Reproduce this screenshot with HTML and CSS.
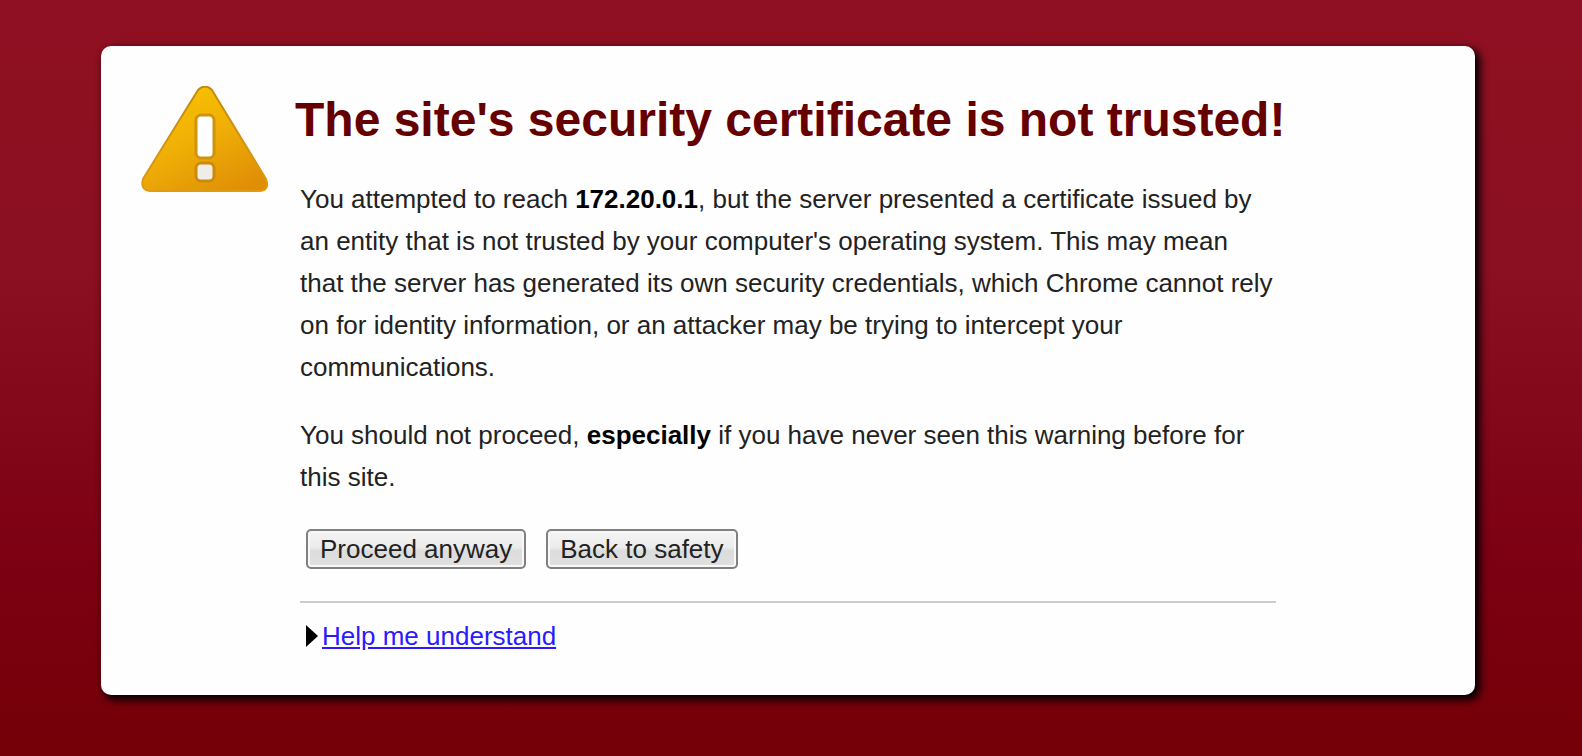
FILE: index.html
```html
<!doctype html>
<html lang="en">
<head>
  <meta charset="utf-8">
  <title>SSL Error</title>
  <link rel="stylesheet" href="styles.css">
</head>
<body>
  <div class="box">
    <svg class="icon" viewBox="0 0 128 106" aria-hidden="true">
      <defs>
        <linearGradient id="fill" x1="0.2" y1="0" x2="0.8" y2="1">
          <stop offset="0" stop-color="#f9c400"/>
          <stop offset="0.5" stop-color="#efae06"/>
          <stop offset="1" stop-color="#df8e06"/>
        </linearGradient>
        <linearGradient id="edge" x1="0" y1="0" x2="0" y2="1">
          <stop offset="0" stop-color="#c08a0c"/>
          <stop offset="1" stop-color="#e09c10"/>
        </linearGradient>
      </defs>
      <path d="M57 4Q64 -3 71 4L125 93Q129 104 119 105L9 105Q-1 104 2 93Z" fill="url(#fill)" stroke="url(#edge)" stroke-width="2"/>
      <rect x="55" y="29" width="18" height="43" rx="5" fill="#fff" stroke="#cf930c" stroke-width="3"/>
      <rect x="55" y="77" width="18" height="18" rx="5" fill="#f0ede8" stroke="#cb8a0c" stroke-width="3"/>
    </svg>
    <div class="content">
      <h1>The site's security certificate is not trusted!</h1>
      <p>You attempted to reach <strong>172.20.0.1</strong>, but the server presented a certificate issued by an entity that is not trusted by your computer's operating system. This may mean that the server has generated its own security credentials, which Chrome cannot rely on for identity information, or an attacker may be trying to intercept your communications.</p>
      <p>You should not proceed, <strong>especially</strong> if you have never seen this warning before for this site.</p>
      <form class="buttons">
        <button type="button">Proceed anyway</button>
        <button type="button">Back to safety</button>
      </form>
      <div class="more">
        <svg class="twisty" viewBox="0 0 12 22" aria-hidden="true"><path d="M0 0L12 11L0 22Z"/></svg>
        <a href="#">Help me understand</a>
      </div>
    </div>
  </div>
</body>
</html>
```

FILE: styles.css
```css
* {
  box-sizing: border-box;
}
html {
  min-height: 100%;
  background: linear-gradient(#8f1022, #8b1021 35%, #7c0012 75%, #750008);
}
body {
  margin: 0;
  padding: 46px 107px 60px 101px;
  font-family: "Liberation Sans", Arial, sans-serif;
  font-size: 26px;
  line-height: 42px;
  color: #222;
}
.box {
  display: flex;
  align-items: flex-start;
  gap: 31px;
  padding: 40px 40px 38px;
  background: #fefefe;
  border-radius: 10px;
  box-shadow: 4px 4px 9px 1px #000;
}
.icon {
  flex: none;
  width: 128px;
  height: 106px;
}
.content {
  max-width: 976px;
}
h1 {
  margin: 4px 0 28px -5px;
  font-size: 48px;
  line-height: 60px;
  color: #660000;
  white-space: nowrap;
}
p {
  margin: 0 0 26px;
}
strong {
  color: #000;
}
.buttons {
  display: flex;
  gap: 20px;
  margin: 0;
  padding: 5px 6px 32px;
  border-bottom: 2px solid #ccc;
}
button {
  height: 40px;
  padding: 0 12px;
  border: 2px solid #808080;
  border-radius: 5px;
  background: linear-gradient(#f4f4f4, #ececec 45%, #dcdcdc 55%, #e0e0e0);
  box-shadow: inset 0 0 0 2px #f8f8f8;
  font-family: inherit;
  font-size: 26px;
  line-height: 34px;
  color: #222;
}
.more {
  display: flex;
  align-items: center;
  gap: 4px;
  padding: 12px 6px 0;
}
.twisty {
  width: 12px;
  height: 22px;
}
a {
  color: #2a1aff;
}
```
